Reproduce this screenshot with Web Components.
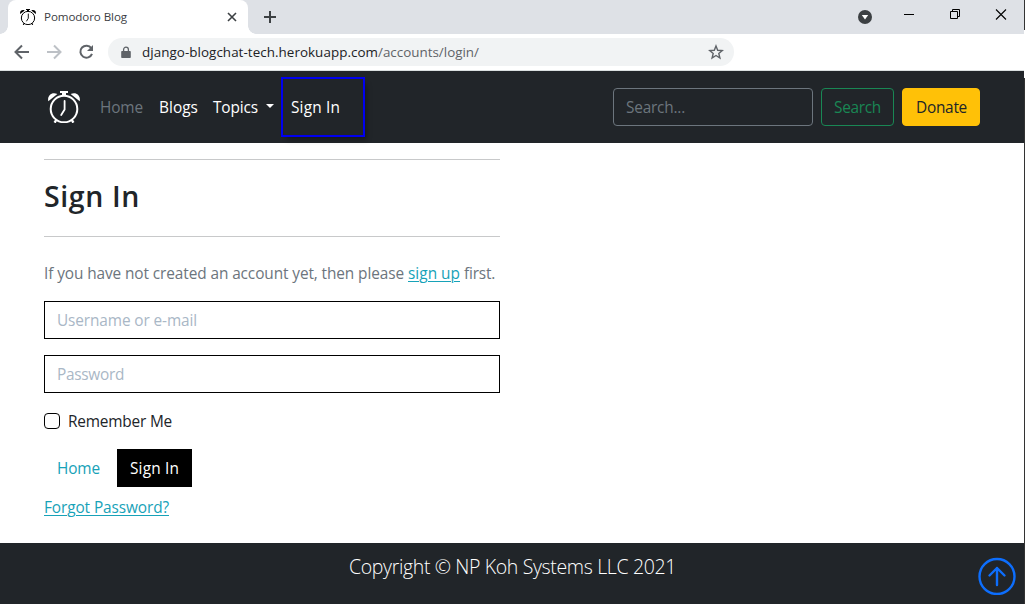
<!DOCTYPE html>
<html lang="en">
<head>
<meta charset="utf-8">
<title>Pomodoro Blog</title>
<style>
html,body{margin:0;height:100%;overflow:hidden;background:#fff}
body{font-family:"Open Sans","Noto Sans",sans-serif;font-weight:400;color:#212529}
</style>
</head>
<body>
<app-window></app-window>
<script>
const define = (name, html, init) => customElements.define(name, class extends HTMLElement {
  constructor() {
    super();
    const t = document.createElement('template');
    t.innerHTML = html;
    this.attachShadow({ mode: 'open' }).append(t.content.cloneNode(true));
  }
  connectedCallback() { if (init) init(this); }
});

/* One line of text, tracked so that it fills the width it is given */
define('fit-text', `<style>
:host{display:inline-block;white-space:nowrap;height:24px;line-height:26px;font-size:15.4px;text-align:left}
:host([u]) span{text-decoration:underline;text-underline-offset:2px;text-decoration-thickness:1px}
span{display:inline-block}
</style><span><slot></slot></span>`, el => {
  const w = +el.getAttribute('w'), s = el.shadowRoot.querySelector('span');
  el.style.width = w + 'px';
  const natural = s.getBoundingClientRect().width;
  s.style.letterSpacing = ((w - natural) / el.textContent.length) + 'px';
});

define('alarm-clock', `<style>:host{display:block;width:32px;height:32px}svg{display:block;width:100%;height:100%}</style>
<svg viewBox="0 0 32 32" fill="none" stroke="currentColor" stroke-width="2">
<circle cx="16" cy="18" r="13.300"/>
<path d="M16.600 10v8.500L13.200 24" stroke-width="1.800" stroke-linecap="round"/>
<path d="M8.500 28.500 6.600 31.700M23.500 28.500l1.900 3.200" stroke-width="2.400"/>
<path d="M12 0h8v2h-2v3h-4V2h-2z" fill="currentColor" stroke="none"/>
<path d="M.3 10.200C-1 4.500 4 .4 9.400 3.100zM31.700 10.200C33 4.500 28 .4 22.600 3.100z" fill="currentColor" stroke="none"/>
</svg>`);

define('tab-strip', `<style>
:host{display:flex;height:34px;background:#dee1e6;color:#3c4043}
.tab{box-sizing:border-box;position:relative;width:240px;margin-left:8px;background:#fff;border-radius:8px 8px 0 0;display:flex;align-items:center;padding:0 10px 0 12px}
.tab:before,.tab:after{content:"";position:absolute;bottom:0;width:8px;height:8px}
.tab:before{left:-8px;background:radial-gradient(circle at 0 0,#dee1e6 7.5px,#fff 8px)}
.tab:after{right:-8px;background:radial-gradient(circle at 100% 0,#dee1e6 7.5px,#fff 8px)}
alarm-clock{width:16px;height:16px;color:#000;margin-right:8px}
fit-text{font-size:11.600px;line-height:24px}
.close{margin-left:auto}
svg{display:block}
.plus{margin:10px 0 0 15px}
.sys{margin-left:auto;display:flex}
</style>
<div class="tab"><alarm-clock></alarm-clock><fit-text w="83">Pomodoro Blog</fit-text>
<svg class="close" width="12" height="12" viewBox="0 0 12 12"><path d="m2 2 8 8M10 2l-8 8" stroke="#3c4043" stroke-width="1.600"/></svg></div>
<svg class="plus" width="14" height="14"><path d="M7 1v12M1 7h12" stroke="#3c4043" stroke-width="2"/></svg>
<svg class="sys" width="169" height="34" fill="none" stroke="#000">
<circle cx="10" cy="17" r="7" fill="#3c4043" stroke="none"/><path d="M6.800 15h6.400L10 19.500z" fill="#fff" stroke="none"/>
<path d="M49 14.500h10M95.500 11.500h7v7h-7zM97.500 11.500v-2h7v7h-2"/>
<path d="m141 9.500 10 10M151 9.500l-10 10" stroke-width="1.100"/></svg>`);

define('address-bar', `<style>
:host{display:flex;align-items:center;box-sizing:border-box;height:37px;background:#fff;border-bottom:1px solid #dadfe0;color:#202124}
svg{display:block;flex:none}
.pill{display:flex;align-items:center;box-sizing:border-box;width:626px;height:28px;border-radius:14px;background:#f1f3f4;padding:0 10px 0 13px}
fit-text{font-size:13.400px;line-height:24px}
.lock{margin-right:11px}.star{margin-left:auto}
.path{color:#5f6368}
</style>
<svg width="108" height="36" fill="none" stroke="#5f6368" stroke-width="2">
<path d="M29 18H16M22 11.500 15.500 18l6.500 6.500"/><path d="M47 18h13M54 11.500l6.500 6.500-6.500 6.500" stroke="#bdc1c6"/>
<path d="M91.300 14.200A6 6 0 1 0 92 19.800"/><path d="M93 11v6h-6z" fill="#5f6368" stroke="none"/></svg>
<div class="pill"><svg class="lock" width="10" height="13"><path d="M1 5h8a.8.8 0 0 1 .8.8v5.400a.8.8 0 0 1-.8.8H1a.8.8 0 0 1-.8-.8V5.800A.8.8 0 0 1 1 5z" fill="#5f6368"/><path d="M2.600 5.500V3.600a2.400 2.400 0 0 1 4.800 0v1.900" fill="none" stroke="#5f6368" stroke-width="1.300"/></svg>
<fit-text w="236">django-blogchat-tech.herokuapp.com</fit-text><fit-text class="path" w="101">/accounts/login/</fit-text>
<svg class="star" width="16" height="16" viewBox="0 0 16 16"><path d="m8 2 1.700 4.300 4.600.3-3.500 2.900 1.100 4.500L8 11.500 4.100 14l1.100-4.500-3.500-2.900 4.600-.3z" fill="none" stroke="#5f6368" stroke-width="1.400"/></svg></div>`);

define('nav-bar', `<style>
:host{display:flex;align-items:center;box-sizing:border-box;height:72px;background:#212529;color:#fff;padding:0 44px 0 48px}
.home{color:#6c757d;margin:0 16px 0 20px}
.topics{margin-left:15px}
.caret{border:4px solid transparent;border-top-color:#fff;border-bottom:0;margin:-2px 7px 0 8px}
.mark{box-sizing:border-box;width:84px;height:60px;border:2px solid #0000f0;padding:16px 0 0 8px;box-shadow:4px 5px 5px -2px rgba(0,0,0,.3);position:relative}
.input,.btn{box-sizing:border-box;height:38px;border:1px solid #6c757d;border-radius:4px;padding:6px 12px;display:flex}
.input{width:200px;color:#6c757d;margin-left:auto}
.btn{margin-left:8px;border-color:#198754;color:#198754;width:73px}
.donate{background:#ffc107;border-color:#ffc107;color:#212529;width:78px;padding-left:13px}
</style>
<alarm-clock></alarm-clock><fit-text class="home" w="43">Home</fit-text><fit-text w="39">Blogs</fit-text><fit-text class="topics" w="45">Topics</fit-text><i class="caret"></i>
<div class="mark"><fit-text w="49">Sign In</fit-text></div>
<div class="input"><fit-text w="59">Search...</fit-text></div>
<div class="btn"><fit-text w="47">Search</fit-text></div>
<div class="btn donate"><fit-text w="51">Donate</fit-text></div>`);

define('text-field', `<style>:host{display:flex;box-sizing:border-box;height:38px;border:1px solid #000;padding:6px 12px;margin-bottom:16px;color:#a9b7c6}</style><slot></slot>`);

define('login-form', `<style>
:host{display:block;width:456px;margin:16px 0 0 44px;color:#212529;height:384px}
hr{margin:0;border:0;height:1px;background:#c8c9ca}
h1{margin:17px 0 20px;height:39px;font-size:0;font-weight:600}
h1 fit-text{font-size:28.500px;line-height:38px;height:38px}
p{margin:24px 0 16px;height:24px;color:#6c757d;display:flex;gap:4px}
a{color:#17a2b8;text-decoration:none}
p a,.forgot{display:flex}
.check{display:flex;align-items:center;gap:8px;height:24px}
.box{box-sizing:border-box;width:16px;height:16px;border:1px solid #000;border-radius:4px}
.actions{display:flex;margin-top:16px;height:38px;align-items:center}
.actions a{margin:0 17px 0 13px;display:flex}
.submit{background:#000;color:#fff;height:38px;width:75px;box-sizing:border-box;padding:7px 13px}
.forgot{margin-top:8px}
.submit fit-text{display:block}
</style>
<hr><h1><fit-text w="96">Sign In</fit-text></h1><hr>
<p><fit-text w="360">If you have not created an account yet, then please</fit-text><a><fit-text u w="52">sign up</fit-text></a><fit-text w="31">first.</fit-text></p>
<text-field><fit-text w="140">Username or e-mail</fit-text></text-field>
<text-field><fit-text w="67">Password</fit-text></text-field>
<div class="check"><span class="box"></span><fit-text w="104">Remember Me</fit-text></div>
<div class="actions"><a><fit-text w="43">Home</fit-text></a><div class="submit"><fit-text w="49">Sign In</fit-text></div></div>
<a class="forgot"><fit-text u w="125">Forgot Password?</fit-text></a>`);

define('page-footer', `<style>
:host{display:flex;justify-content:center;box-sizing:border-box;height:61px;background:#212529;color:#fff;padding:9px 0 0 1px;position:relative}
fit-text{font-size:19.500px;line-height:30px;height:30px;font-weight:300}
svg{position:absolute;right:8px;top:14px}
</style><fit-text w="327">Copyright © NP Koh Systems LLC 2021</fit-text>
<svg width="38" height="38" fill="none" stroke="#0d6efd" stroke-width="2.400"><circle cx="19" cy="19.500" r="17.500"/><path d="M19 28V11M11.500 18.500 19 11l7.500 7.500" stroke-linecap="round" stroke-linejoin="round"/></svg>`);

define('app-window', `<style>
:host{display:grid;grid-template-columns:1024px 1px;height:604px}
.edge{background:linear-gradient(#333 0 30px,#fff 30px 78px,#333 78px)}
</style><main><tab-strip></tab-strip><address-bar></address-bar><nav-bar></nav-bar><login-form></login-form><page-footer></page-footer></main><div class="edge"></div>`);
</script>
</body>
</html>
